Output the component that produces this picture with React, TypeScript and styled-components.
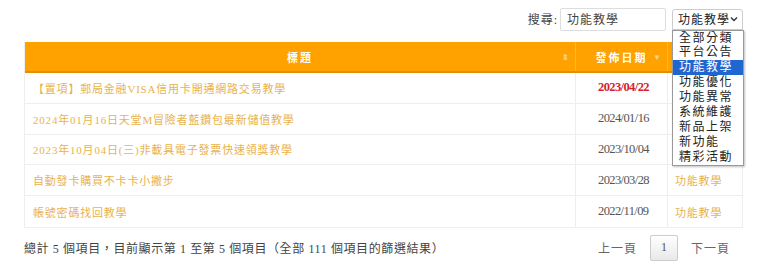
import React from "react";
import styled, { createGlobalStyle } from "styled-components";

const Global = createGlobalStyle`
  html, body { margin: 0; padding: 0; background: #fff; }
  body { font-family: "Liberation Serif", "Noto Sans CJK TC", serif; color: #444; }
`;

const Page = styled.div`
  width: 768px;
  padding: 7px 25px 0 24px;
  box-sizing: border-box;
  position: relative;
`;

const Toolbar = styled.div`
  display: flex;
  justify-content: flex-end;
  align-items: center;
  height: 24px;
  gap: 6px;
  position: relative;
`;

const Label = styled.label`
  font-size: 12px;
  letter-spacing: 1px;
  color: #444;
  display: flex;
  align-items: center;
  gap: 2px;
`;

const SearchInput = styled.div`
  width: 106px;
  height: 23px;
  border: 1px solid #ddd;
  border-radius: 2px;
  box-sizing: border-box;
  font-size: 12px;
  letter-spacing: 1px;
  padding: 0 6px;
  display: flex;
  align-items: center;
  color: #444;
`;

const SelectWrap = styled.div`
  position: relative;
  width: 71px;
`;

const SelectBox = styled.div`
  height: 21px;
  box-sizing: border-box;
  border: 1px solid #ccc;
  border-radius: 3px 3px 0 0;
  font-size: 12px;
  letter-spacing: 1px;
  padding: 0 4px 0 5px;
  display: flex;
  align-items: center;
  justify-content: space-between;
  color: #222;
  background: #fff;
`;

const DropList = styled.div`
  position: absolute;
  top: 21px;
  left: 0;
  width: 70px;
  background: #fff;
  border: 1px solid #999;
  box-shadow: 1px 1px 2px rgba(0, 0, 0, 0.25);
  z-index: 10;
  padding: 0;
`;

const DropItem = styled.div<{ $active?: boolean }>`
  height: 14.9px;
  line-height: 15px;
  font-size: 12px;
  letter-spacing: 1.5px;
  padding-left: 6px;
  color: ${(p) => (p.$active ? "#fff" : "#222")};
  background: ${(p) => (p.$active ? "#1f66d1" : "transparent")};
`;

const Table = styled.div`
  margin-top: 11px;
  border: 1px solid #eee;
  border-top: none;
`;

const Row = styled.div<{ $head?: boolean }>`
  display: grid;
  grid-template-columns: 551px 92px 1fr;
  height: ${(p) => (p.$head ? "31px" : "30.8px")};
  background: ${(p) => (p.$head ? "#ffa200" : "#fff")};
  border-bottom: ${(p) => (p.$head ? "2px solid #e58f00" : "1px solid #eee")};
  box-sizing: border-box;
  &:last-child { border-bottom: none; }
`;

const HeadCell = styled.div`
  position: relative;
  display: flex;
  align-items: center;
  justify-content: center;
  color: #fff;
  font-weight: bold;
  font-size: 11px;
  letter-spacing: 2px;
  border-right: 1px solid rgba(255, 255, 255, 0.2);
  &:last-child { border-right: none; }
`;

const SortMark = styled.span`
  position: absolute;
  right: 6px;
  top: 50%;
  transform: translateY(-50%);
  font-size: 8px;
  color: rgba(255, 255, 255, 0.55);
  letter-spacing: 0;
`;

const Cell = styled.div<{ $kind?: "title" | "date" | "hot" | "cat" }>`
  display: flex;
  align-items: center;
  padding-left: ${(p) => (p.$kind === "title" ? "8px" : p.$kind === "cat" ? "7px" : "22px")};
  border-right: 1px solid #eee;
  &:last-child { border-right: none; }
  font-size: ${(p) => (p.$kind === "date" || p.$kind === "hot" ? "12.5px" : "11px")};
  letter-spacing: ${(p) => (p.$kind === "date" || p.$kind === "hot" ? "-0.6px" : "0.8px")};
  color: ${(p) =>
    p.$kind === "hot" ? "#d3232e" : p.$kind === "date" ? "#555" : "#e9b24c"};
  font-weight: ${(p) => (p.$kind === "hot" ? "bold" : "normal")};
  white-space: nowrap;
  overflow: hidden;
`;

const Footer = styled.div`
  display: flex;
  justify-content: space-between;
  align-items: center;
  margin-top: 7px;
  height: 26px;
`;

const Info = styled.div`
  font-size: 12px;
  letter-spacing: 0.6px;
  color: #444;
`;

const Pager = styled.div`
  display: flex;
  align-items: center;
`;

const PageLink = styled.span`
  font-size: 12px;
  letter-spacing: 1px;
  color: #666;
  padding: 0 13px;
`;

const PageBtn = styled.span`
  width: 28px;
  height: 26px;
  box-sizing: border-box;
  border: 1px solid #ccc;
  border-radius: 2px;
  background: linear-gradient(#fff, #e8e8e8);
  display: flex;
  align-items: center;
  justify-content: center;
  font-size: 12px;
  color: #555;
`;

const rows = [
  { t: "【置項】郵局金融VISA信用卡開通網路交易教學", d: "2023/04/22", hot: true },
  { t: "2024年01月16日天堂M冒險者藍鑽包最新儲值教學", d: "2024/01/16" },
  { t: "2023年10月04日(三)非載具電子發票快速領獎教學", d: "2023/10/04" },
  { t: "自動發卡購買不卡卡小撇步", d: "2023/03/28" },
  { t: "帳號密碼找回教學", d: "2022/11/09" },
];

const options = ["全部分類", "平台公告", "功能教學", "功能優化", "功能異常", "系統維護", "新品上架", "新功能", "精彩活動"];

export default function App() {
  return (
    <>
      <Global />
      <Page>
        <Toolbar>
          <Label>
            搜尋:
            <SearchInput>功能教學</SearchInput>
          </Label>
          <SelectWrap>
            <SelectBox>
              功能教學
              <svg width="8" height="6" viewBox="0 0 8 6">
                <path d="M1 1.5 L4 4.5 L7 1.5" fill="none" stroke="#333" strokeWidth="1.4" />
              </svg>
            </SelectBox>
            <DropList>
              {options.map((o) => (
                <DropItem key={o} $active={o === "功能教學"}>
                  {o}
                </DropItem>
              ))}
            </DropList>
          </SelectWrap>
        </Toolbar>
        <Table>
          <Row $head>
            <HeadCell>
              標題<SortMark>⇕</SortMark>
            </HeadCell>
            <HeadCell>
              發佈日期<SortMark>▼</SortMark>
            </HeadCell>
            <HeadCell>分類</HeadCell>
          </Row>
          {rows.map((r) => (
            <Row key={r.t}>
              <Cell $kind="title">{r.t}</Cell>
              <Cell $kind={r.hot ? "hot" : "date"}>{r.d}</Cell>
              <Cell $kind="cat">功能教學</Cell>
            </Row>
          ))}
        </Table>
        <Footer>
          <Info>總計 5 個項目，目前顯示第 1 至第 5 個項目（全部 111 個項目的篩選結果）</Info>
          <Pager>
            <PageLink>上一頁</PageLink>
            <PageBtn>1</PageBtn>
            <PageLink>下一頁</PageLink>
          </Pager>
        </Footer>
      </Page>
    </>
  );
}
